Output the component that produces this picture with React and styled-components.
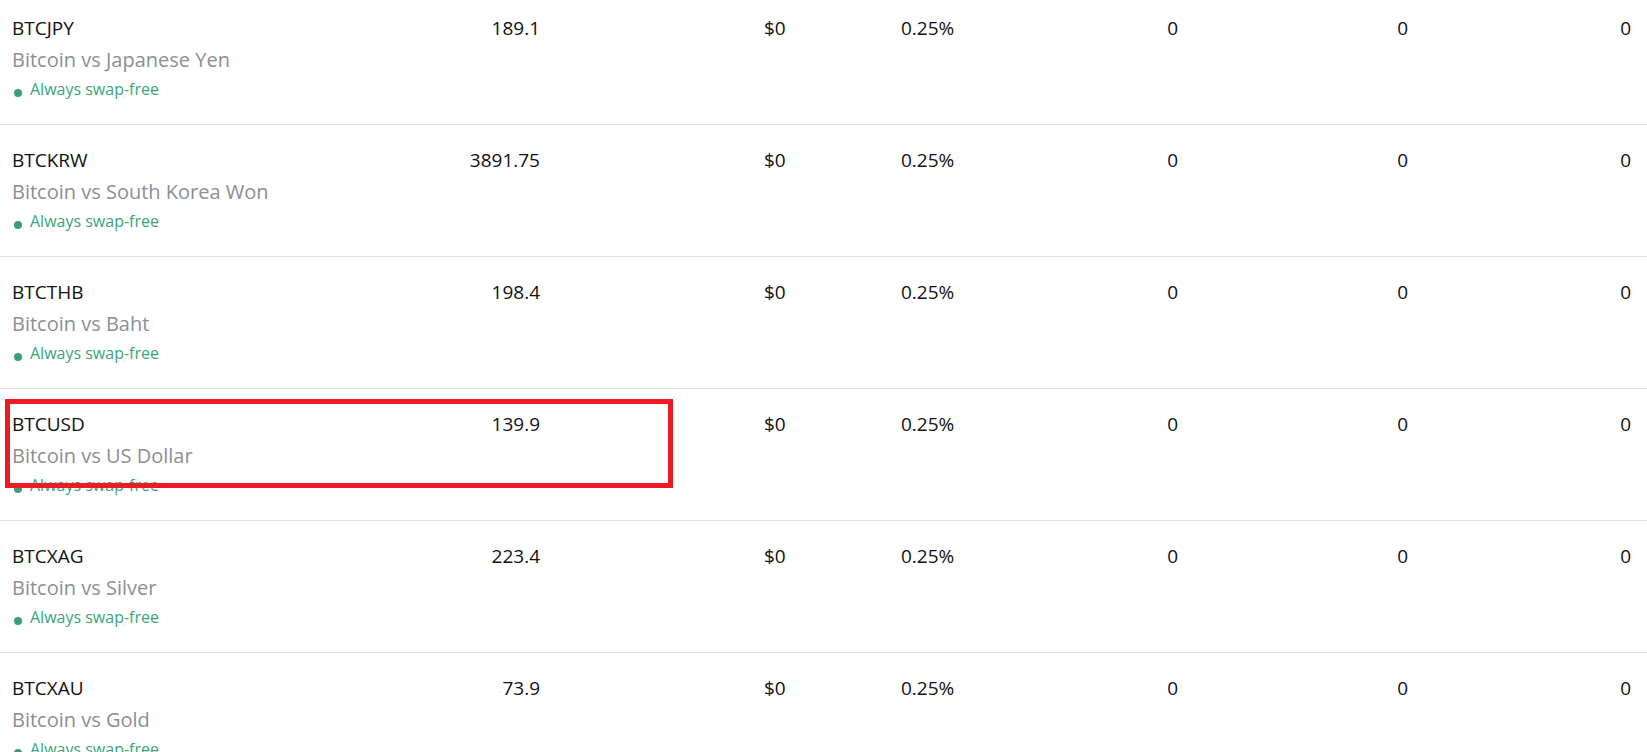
import styled, { createGlobalStyle } from "styled-components";

const GlobalStyle = createGlobalStyle`
  html, body {
    margin: 0;
    padding: 0;
    background: #ffffff;
    overflow: hidden;
  }
  body {
    font-family: "Open Sans", "Liberation Sans", sans-serif;
    color: #111111;
  }
`;

const rows = [
  { symbol: "BTCJPY", name: "Bitcoin vs Japanese Yen", price: "189.1" },
  { symbol: "BTCKRW", name: "Bitcoin vs South Korea Won", price: "3891.75" },
  { symbol: "BTCTHB", name: "Bitcoin vs Baht", price: "198.4" },
  { symbol: "BTCUSD", name: "Bitcoin vs US Dollar", price: "139.9", marked: true },
  { symbol: "BTCXAG", name: "Bitcoin vs Silver", price: "223.4" },
  { symbol: "BTCXAU", name: "Bitcoin vs Gold", price: "73.9" },
];

function App() {
  return (
    <>
      <GlobalStyle />
      <Table>
        {rows.map((row) => (
          <Row key={row.symbol}>
            <Instrument>
              <Symbol>{row.symbol}</Symbol>
              <Name>{row.name}</Name>
              <SwapFree>
                <Dot />
                Always swap-free
              </SwapFree>
            </Instrument>
            <Cell $align="right">{row.price}</Cell>
            <Cell />
            <Cell>$0</Cell>
            <Cell>0.25%</Cell>
            <Cell $align="right">0</Cell>
            <Cell $align="right">0</Cell>
            <Cell $align="right">0</Cell>
            {row.marked && <Highlight />}
          </Row>
        ))}
      </Table>
    </>
  );
}

const Table = styled.div`
  display: flex;
  flex-direction: column;
  margin-top: -7px;
`;

const Row = styled.div`
  position: relative;
  display: grid;
  grid-template-columns: 302px 226px 224px 137px 139px 138px 230px 223px;
  align-items: start;
  height: 132px;
  box-sizing: border-box;
  padding: 21px 16px 0 12px;
  border-bottom: 1px solid #e2e2e2;
`;

const Instrument = styled.div`
  display: flex;
  flex-direction: column;
  white-space: nowrap;
`;

const Symbol = styled.div`
  font-size: 19px;
  line-height: 28px;
  color: #111111;
`;

const Name = styled.div`
  margin-top: 4px;
  font-size: 20px;
  line-height: 28px;
  color: #8e8e93;
`;

const SwapFree = styled.div`
  display: flex;
  align-items: center;
  gap: 8px;
  margin-top: 4px;
  font-size: 16px;
  line-height: 22px;
  color: #3aa57a;
`;

const Dot = styled.span`
  width: 8px;
  height: 8px;
  margin-top: 7px;
  margin-left: 2px;
  border-radius: 50%;
  background: #3b9d75;
`;

const Cell = styled.div`
  font-size: 19px;
  line-height: 28px;
  color: #111111;
  text-align: ${(p) => p.$align || "left"};
  white-space: nowrap;
`;

const Highlight = styled.div`
  position: absolute;
  top: 10px;
  left: 5px;
  width: 668px;
  height: 89px;
  box-sizing: border-box;
  border: 5px solid #ed1c24;
  pointer-events: none;
`;

export default App;
